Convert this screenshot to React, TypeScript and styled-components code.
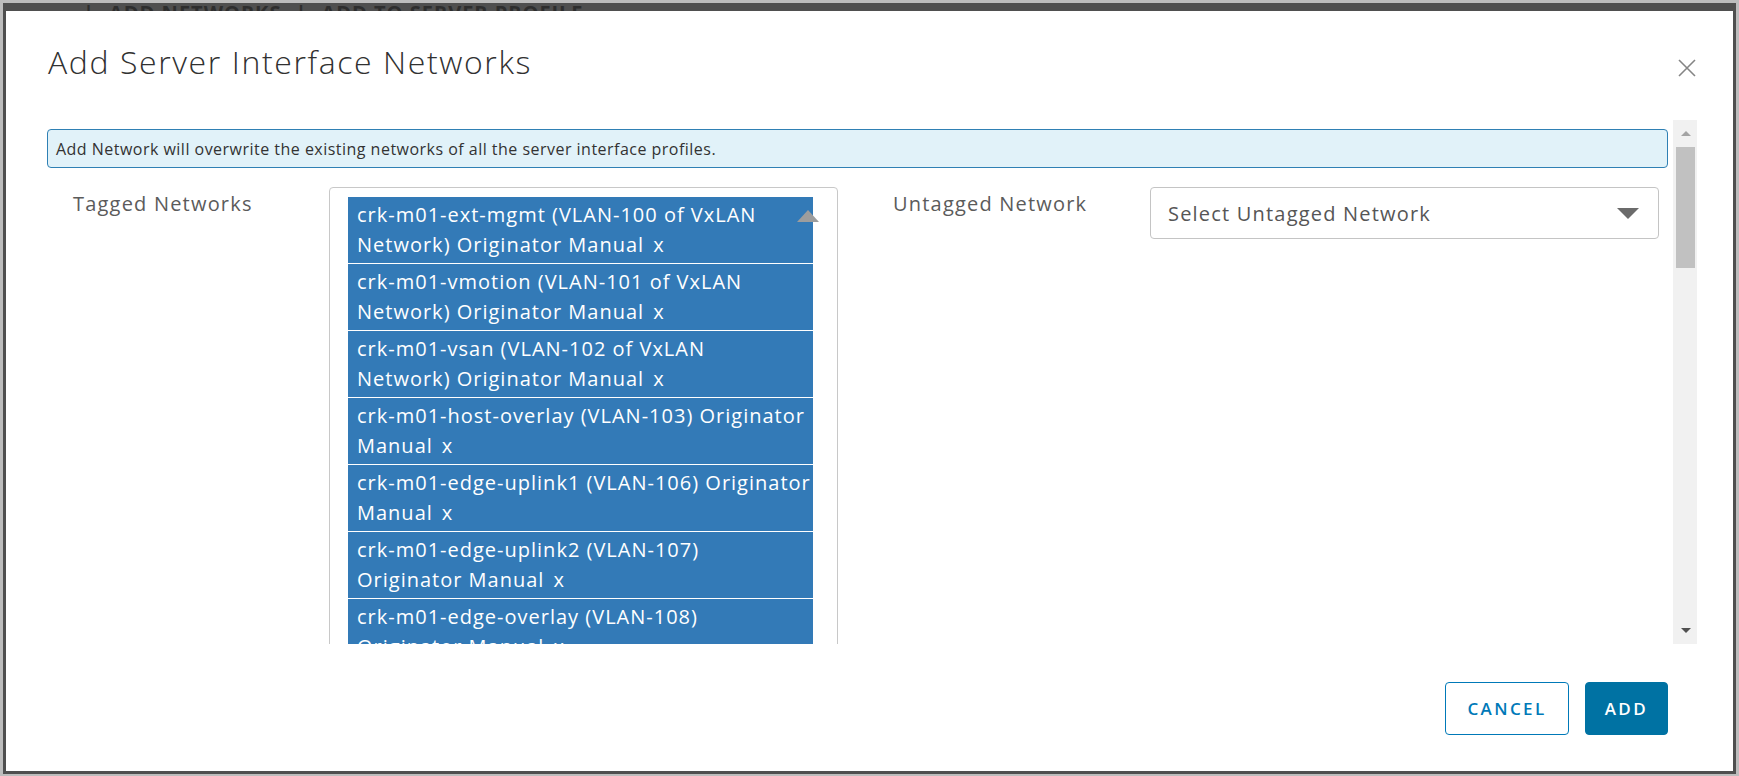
import React from "react";
import styled, { createGlobalStyle } from "styled-components";

const GlobalStyle = createGlobalStyle`
  html, body {
    margin: 0;
    padding: 0;
    background: #bdbdbd;
    font-family: "Open Sans", "Liberation Sans", sans-serif;
  }
  * { box-sizing: border-box; }
`;

const Frame = styled.div`
  height: 776px;
  padding: 3px 3px 2px 3px;
`;

const Backdrop = styled.div`
  background: #4f4f4f;
  height: 771px;
  padding: 0 3px 3px 3px;
  display: flex;
  flex-direction: column;
`;

// the page behind the dialog peeks out above it
const PageStrip = styled.div`
  height: 8px;
  overflow: hidden;
  display: flex;
  align-items: flex-end;
  gap: 14px;
  padding-left: 77px;
  color: #2e2e2e;
  font-size: 20px;
  font-weight: 700;
  letter-spacing: 1px;
  line-height: 20px;
  white-space: nowrap;

  span {
    margin-bottom: -12px;
  }
`;

const Modal = styled.div`
  flex: 1;
  background: #fff;
  display: flex;
  flex-direction: column;
`;

const Header = styled.div`
  height: 109px;
  padding: 31px 36px 0 42px;
  display: flex;
  justify-content: space-between;
  align-items: flex-start;
`;

const Title = styled.h1`
  margin: 0;
  font-size: 32px;
  line-height: 40px;
  font-weight: 300;
  letter-spacing: 1.6px;
  color: #313131;
`;

const CloseButton = styled.button`
  margin-top: 16px;
  width: 20px;
  height: 20px;
  padding: 0;
  border: none;
  background: none;
  display: flex;
`;

const Body = styled.div`
  height: 524px;
  margin: 0 36px 0 41px;
  display: flex;
`;

const ScrollContent = styled.div`
  flex: 1;
  overflow: hidden;
  padding: 9px 5px 0 0;
`;

const Alert = styled.div`
  height: 39px;
  border: 1px solid #2f80b4;
  border-radius: 4px;
  background: #e1f2f9;
  padding: 0 8px;
  display: flex;
  align-items: center;
  font-size: 16px;
  letter-spacing: 0.48px;
  color: #333;
`;

const FormRow = styled.div`
  margin-top: 19px;
  display: flex;
  align-items: flex-start;
`;

const Label = styled.label<{ $width: number; $indent: number }>`
  width: ${(p) => p.$width}px;
  padding-left: ${(p) => p.$indent}px;
  font-size: 20px;
  letter-spacing: 1.2px;
  line-height: 34px;
  color: #5b5b5b;
  flex-shrink: 0;
`;

const MultiBox = styled.div`
  position: relative;
  width: 509px;
  flex-shrink: 0;
  border: 1px solid #c8c8c8;
  border-radius: 4px;
  padding: 9px 24px 10px 18px;
`;

const UpCaret = styled.span`
  position: absolute;
  top: 22px;
  right: 18px;
  width: 0;
  height: 0;
  border-left: 11px solid transparent;
  border-right: 11px solid transparent;
  border-bottom: 12px solid #9d9d9d;
`;

const Chip = styled.div`
  background: #337ab7;
  color: #fff;
  padding: 3px 9px;
  margin-bottom: 1px;
  font-size: 20px;
  letter-spacing: 1px;
  line-height: 30px;
  white-space: nowrap;
`;

const Remove = styled.span`
  margin-left: 9px;
`;

const Select = styled.div`
  width: 509px;
  height: 52px;
  flex-shrink: 0;
  border: 1px solid #c4c4c4;
  border-radius: 4px;
  padding: 0 19px 0 17px;
  display: flex;
  align-items: center;
  justify-content: space-between;
  font-size: 20px;
  letter-spacing: 1.2px;
  color: #565656;
`;

const DownCaret = styled.span`
  width: 0;
  height: 0;
  border-left: 11px solid transparent;
  border-right: 11px solid transparent;
  border-top: 11px solid #6b6b6b;
`;

const ScrollBar = styled.div`
  width: 24px;
  background: #f1f1f1;
  display: flex;
  flex-direction: column;
  padding: 0 2px 0 3px;
`;

const ArrowCell = styled.div<{ $up?: boolean }>`
  height: 27px;
  display: flex;
  align-items: center;
  justify-content: center;
  ${(p) => (p.$up ? "" : "margin-top: auto;")}

  &::before {
    content: "";
    width: 0;
    height: 0;
    border-left: 5px solid transparent;
    border-right: 5px solid transparent;
    ${(p) =>
      p.$up
        ? "border-bottom: 5px solid #a3a3a3;"
        : "border-top: 5px solid #505050;"}
  }
`;

const Thumb = styled.div`
  height: 121px;
  background: #c1c1c1;
`;

const Footer = styled.div`
  flex: 1;
  display: flex;
  justify-content: flex-end;
  align-items: flex-start;
  gap: 16px;
  padding: 38px 65px 0 0;
`;

const Button = styled.button<{ $primary?: boolean }>`
  height: 53px;
  padding: 0 ${(p) => (p.$primary ? 19 : 21)}px;
  border-radius: 4px;
  border: 1px solid ${(p) => (p.$primary ? "#0072a3" : "#0079b8")};
  background: ${(p) => (p.$primary ? "#0072a3" : "#fff")};
  color: ${(p) => (p.$primary ? "#fff" : "#0079b8")};
  font-family: "Open Sans", "Liberation Sans", sans-serif;
  font-size: 17px;
  font-weight: 600;
  letter-spacing: 2.4px;
`;

const networks: [string, string][] = [
  ["crk-m01-ext-mgmt (VLAN-100 of VxLAN", "Network) Originator Manual"],
  ["crk-m01-vmotion (VLAN-101 of VxLAN", "Network) Originator Manual"],
  ["crk-m01-vsan (VLAN-102 of VxLAN", "Network) Originator Manual"],
  ["crk-m01-host-overlay (VLAN-103) Originator", "Manual"],
  ["crk-m01-edge-uplink1 (VLAN-106) Originator", "Manual"],
  ["crk-m01-edge-uplink2 (VLAN-107)", "Originator Manual"],
  ["crk-m01-edge-overlay (VLAN-108)", "Originator Manual"],
];

export default function App() {
  return (
    <Frame>
      <GlobalStyle />
      <Backdrop>
        <PageStrip>
          <span>|</span>
          <span>ADD NETWORKS</span>
          <span>|</span>
          <span>ADD TO SERVER PROFILE</span>
        </PageStrip>
        <Modal>
          <Header>
            <Title>Add Server Interface Networks</Title>
            <CloseButton aria-label="Close">
              <svg width="20" height="20" viewBox="0 0 20 20">
                <path d="M2 2 L18 18 M18 2 L2 18" stroke="#858585" strokeWidth="1.6" fill="none" />
              </svg>
            </CloseButton>
          </Header>
          <Body>
            <ScrollContent>
              <Alert>Add Network will overwrite the existing networks of all the server interface profiles.</Alert>
              <FormRow>
                <Label $width={282} $indent={26}>Tagged Networks</Label>
                <MultiBox>
                  {networks.map(([first, second]) => (
                    <Chip key={first}>
                      <div>{first}</div>
                      <div>
                        {second}
                        <Remove>x</Remove>
                      </div>
                    </Chip>
                  ))}
                  <UpCaret />
                </MultiBox>
                <Label $width={312} $indent={55}>Untagged Network</Label>
                <Select>
                  <span>Select Untagged Network</span>
                  <DownCaret />
                </Select>
              </FormRow>
            </ScrollContent>
            <ScrollBar>
              <ArrowCell $up />
              <Thumb />
              <ArrowCell />
            </ScrollBar>
          </Body>
          <Footer>
            <Button>CANCEL</Button>
            <Button $primary>ADD</Button>
          </Footer>
        </Modal>
      </Backdrop>
    </Frame>
  );
}
